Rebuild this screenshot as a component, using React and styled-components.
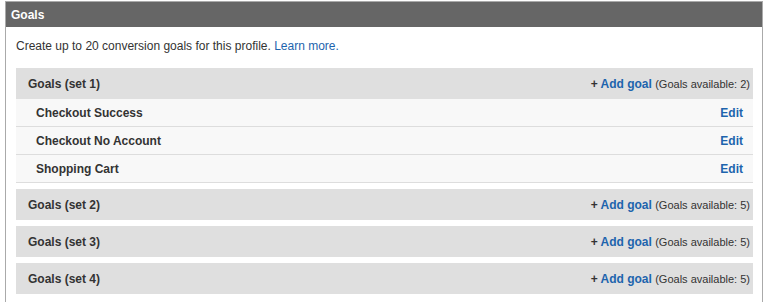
import React from "react";
import styled, { createGlobalStyle } from "styled-components";

const Global = createGlobalStyle`
  body {
    margin: 0;
    background: #fff;
    font-family: "Liberation Sans", Arial, sans-serif;
    color: #333;
  }
`;

const Panel = styled.div`
  box-sizing: border-box;
  width: 758px;
  margin: 1px 0 0 5px;
  border: 1px solid #aaa;
  border-bottom: none;
  padding-bottom: 8px;
`;

const Header = styled.div`
  height: 25px;
  display: flex;
  align-items: center;
  padding-left: 5px;
  background: #666;
  color: #fff;
  font-size: 12px;
  font-weight: bold;
`;

const Content = styled.div`
  padding: 12px 9px 0 10px;
`;

const Intro = styled.p`
  margin: 0 0 15px 0;
  font-size: 12px;
  line-height: 14px;
  color: #333;
`;

const Link = styled.a`
  color: #1d64ad;
  text-decoration: none;
  font-weight: ${(p) => (p.$bold ? "bold" : "normal")};
`;

const Set = styled.div`
  margin-bottom: 6px;
`;

const SetHeader = styled.div`
  height: 31px;
  display: flex;
  align-items: center;
  justify-content: space-between;
  padding: 1px 3px 0 12px;
  box-sizing: border-box;
  background: #dfdfdf;
  font-size: 12px;
  font-weight: bold;
`;

const Available = styled.span`
  font-size: 12px;
  font-weight: bold;
  color: #333;
`;

const Count = styled.span`
  font-size: 11px;
  font-weight: normal;
  color: #333;
`;

const Row = styled.div`
  box-sizing: border-box;
  height: 28px;
  display: flex;
  align-items: center;
  justify-content: space-between;
  padding: 1px 10px 0 20px;
  background: #f8f8f8;
  border-bottom: 1px solid #ddd;
  font-size: 12px;
  font-weight: bold;
`;

const sets = [
  { name: "Goals (set 1)", available: 2, goals: ["Checkout Success", "Checkout No Account", "Shopping Cart"] },
  { name: "Goals (set 2)", available: 5, goals: [] },
  { name: "Goals (set 3)", available: 5, goals: [] },
  { name: "Goals (set 4)", available: 5, goals: [] },
];

const App = () => {
  return (
    <>
      <Global />
      <Panel>
        <Header>Goals</Header>
        <Content>
          <Intro>
            Create up to 20 conversion goals for this profile. <Link href="#">Learn more.</Link>
          </Intro>
          {sets.map((s) => (
            <Set key={s.name}>
              <SetHeader>
                <span>{s.name}</span>
                <Available>
                  + <Link $bold href="#">Add goal</Link>{" "}
                  <Count>(Goals available: {s.available})</Count>
                </Available>
              </SetHeader>
              {s.goals.map((g) => (
                <Row key={g}>
                  <span>{g}</span>
                  <Link $bold href="#">Edit</Link>
                </Row>
              ))}
            </Set>
          ))}
        </Content>
      </Panel>
    </>
  );
};

export default App;
